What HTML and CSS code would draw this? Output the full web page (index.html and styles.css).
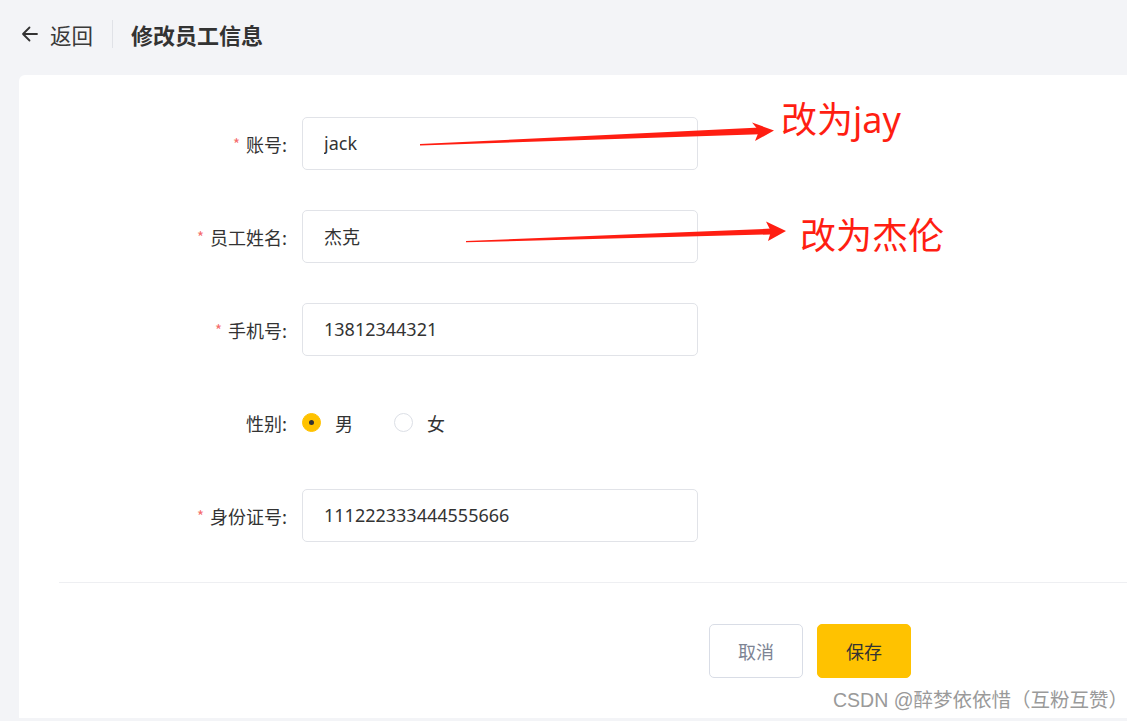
FILE: index.html
```html
<!DOCTYPE html>
<html lang="zh-CN">
<head>
<meta charset="utf-8">
<title>修改员工信息</title>
<link rel="stylesheet" href="styles.css">
</head>
<body>
<header class="topbar">
  <a class="back">
    <svg class="back-icon" width="20" height="20" viewBox="0 0 20 20"><path d="M17 10H3M9.5 3.5L3 10l6.5 6.5" fill="none" stroke="#333" stroke-width="1.8" stroke-linecap="round" stroke-linejoin="round"/></svg>
    <span class="back-text">返回</span>
  </a>
  <span class="vline"></span>
  <h1 class="title">修改员工信息</h1>
</header>
<main class="card">
  <form class="form">
    <div class="form-item">
      <label class="label"><span class="req">*</span>账号:</label>
      <input class="input" value="jack">
    </div>
    <div class="form-item">
      <label class="label"><span class="req">*</span>员工姓名:</label>
      <input class="input" value="杰克">
    </div>
    <div class="form-item">
      <label class="label"><span class="req">*</span>手机号:</label>
      <input class="input" value="13812344321">
    </div>
    <div class="form-item">
      <label class="label">性别:</label>
      <div class="radios">
        <span class="radio checked"><span class="dot"></span></span><span class="radio-text">男</span>
        <span class="radio"></span><span class="radio-text">女</span>
      </div>
    </div>
    <div class="form-item last">
      <label class="label"><span class="req">*</span>身份证号:</label>
      <input class="input" value="111222333444555666">
    </div>
  </form>
  <div class="divider"></div>
  <div class="footer">
    <button class="btn btn-cancel" type="button">取消</button>
    <button class="btn btn-save" type="button">保存</button>
  </div>
</main>
<svg class="arrows" width="1127" height="721" viewBox="0 0 1127 721">
  <polygon fill="#ff1e12" points="420,144 760,127.6 760,134.2 420,145.4"/>
  <polygon fill="#ff1e12" points="752,122.5 774,130.5 755,141 759,131"/>
  <polygon fill="#ff1e12" points="466,241 771,228.6 771,234.4 466,242.3"/>
  <polygon fill="#ff1e12" points="766,221.5 786,231 768,241 771,231.5"/>
</svg>
<div class="note note-1">改为jay</div>
<div class="note note-2">改为杰伦</div>
<div class="watermark">CSDN @醉梦依依惜（互粉互赞）</div>
</body>
</html>
```
FILE: styles.css
```css
* { box-sizing: border-box; }
html, body { margin: 0; padding: 0; }
body {
  background: #f3f4f7;
  font-family: "Noto Sans", "Noto Sans CJK SC", sans-serif;
  color: #333;
  width: 1127px;
  height: 721px;
  overflow: hidden;
  position: relative;
}
.topbar {
  height: 68px;
  display: flex;
  align-items: center;
  padding-left: 20px;
}
.back {
  display: flex;
  align-items: center;
  color: #333;
}
.back-icon { display: block; }
.back-text {
  margin-left: 10px;
  font-size: 21.5px;
  font-family: "Noto Sans CJK SC", sans-serif;
  color: #3a3a3a;
}
.vline {
  width: 1px;
  height: 28px;
  background: #e0e2e7;
  margin-left: 19px;
}
.title {
  margin: 0 0 0 18px;
  font-size: 22px;
  font-weight: bold;
  font-family: "Noto Sans CJK SC", sans-serif;
  color: #333;
}
.card {
  margin: 7px 0 0 19px;
  height: 643px;
  background: #fff;
  border-radius: 6px 0 0 0;
  padding-top: 42px;
}
.form { padding-left: 40px; }
.form-item {
  display: flex;
  align-items: center;
  height: 53px;
  margin-bottom: 40px;
}
.label {
  width: 243px;
  padding-right: 15px;
  text-align: right;
  font-size: 18px;
  color: #333;
  font-family: "Noto Sans CJK SC", sans-serif;
}
.req {
  color: #f56c6c;
  font-size: 15px;
  margin-right: 6px;
  position: relative;
  top: -2px;
}
.input {
  width: 396px;
  height: 53px;
  border: 1px solid #e1e3e8;
  border-radius: 5px;
  padding: 0 21px 2px;
  font-size: 18px;
  font-family: "Noto Sans", "Noto Sans CJK SC", sans-serif;
  color: #333;
  background: #fff;
  outline: none;
}
.radios {
  display: flex;
  align-items: center;
}
.radio {
  width: 19px;
  height: 19px;
  border-radius: 50%;
  border: 1px solid #dcdfe6;
  background: #fff;
  display: flex;
  align-items: center;
  justify-content: center;
}
.radio.checked {
  background: #ffc200;
  border-color: #ffc200;
}
.dot {
  width: 5px;
  height: 5px;
  border-radius: 50%;
  background: #333;
}
.radio-text {
  margin-left: 14px;
  margin-right: 41px;
  font-size: 18px;
  font-family: "Noto Sans CJK SC", sans-serif;
  color: #333;
}
.divider {
  margin-left: 40px;
  height: 1px;
  background: #eeeff2;
}
.footer {
  display: flex;
  gap: 14px;
  padding: 41px 0 0 690px;
}
.btn {
  width: 94px;
  height: 54px;
  border-radius: 5px;
  font-size: 18px;
  font-family: "Noto Sans CJK SC", sans-serif;
  cursor: pointer;
  padding: 0;
}
.btn-cancel {
  background: #fff;
  border: 1px solid #d9dde6;
  color: #7d8494;
}
.btn-save {
  background: #ffc200;
  border: 1px solid #ffc200;
  color: #333;
}
.arrows {
  position: absolute;
  left: 0;
  top: 0;
  pointer-events: none;
}
.note {
  position: absolute;
  color: #ff1e12;
  font-size: 36px;
  line-height: 40px;
  font-family: "Noto Sans", "Noto Sans CJK SC", sans-serif;
  white-space: nowrap;
}
.note-1 { left: 781px; top: 100px; }
.note-2 { left: 800px; top: 216px; }
.watermark {
  position: absolute;
  left: 833px;
  top: 688px;
  font-size: 19.5px;
  line-height: 24px;
  color: #9a9a9a;
  font-family: "Liberation Sans", "Noto Sans CJK SC", sans-serif;
  white-space: nowrap;
}
```
